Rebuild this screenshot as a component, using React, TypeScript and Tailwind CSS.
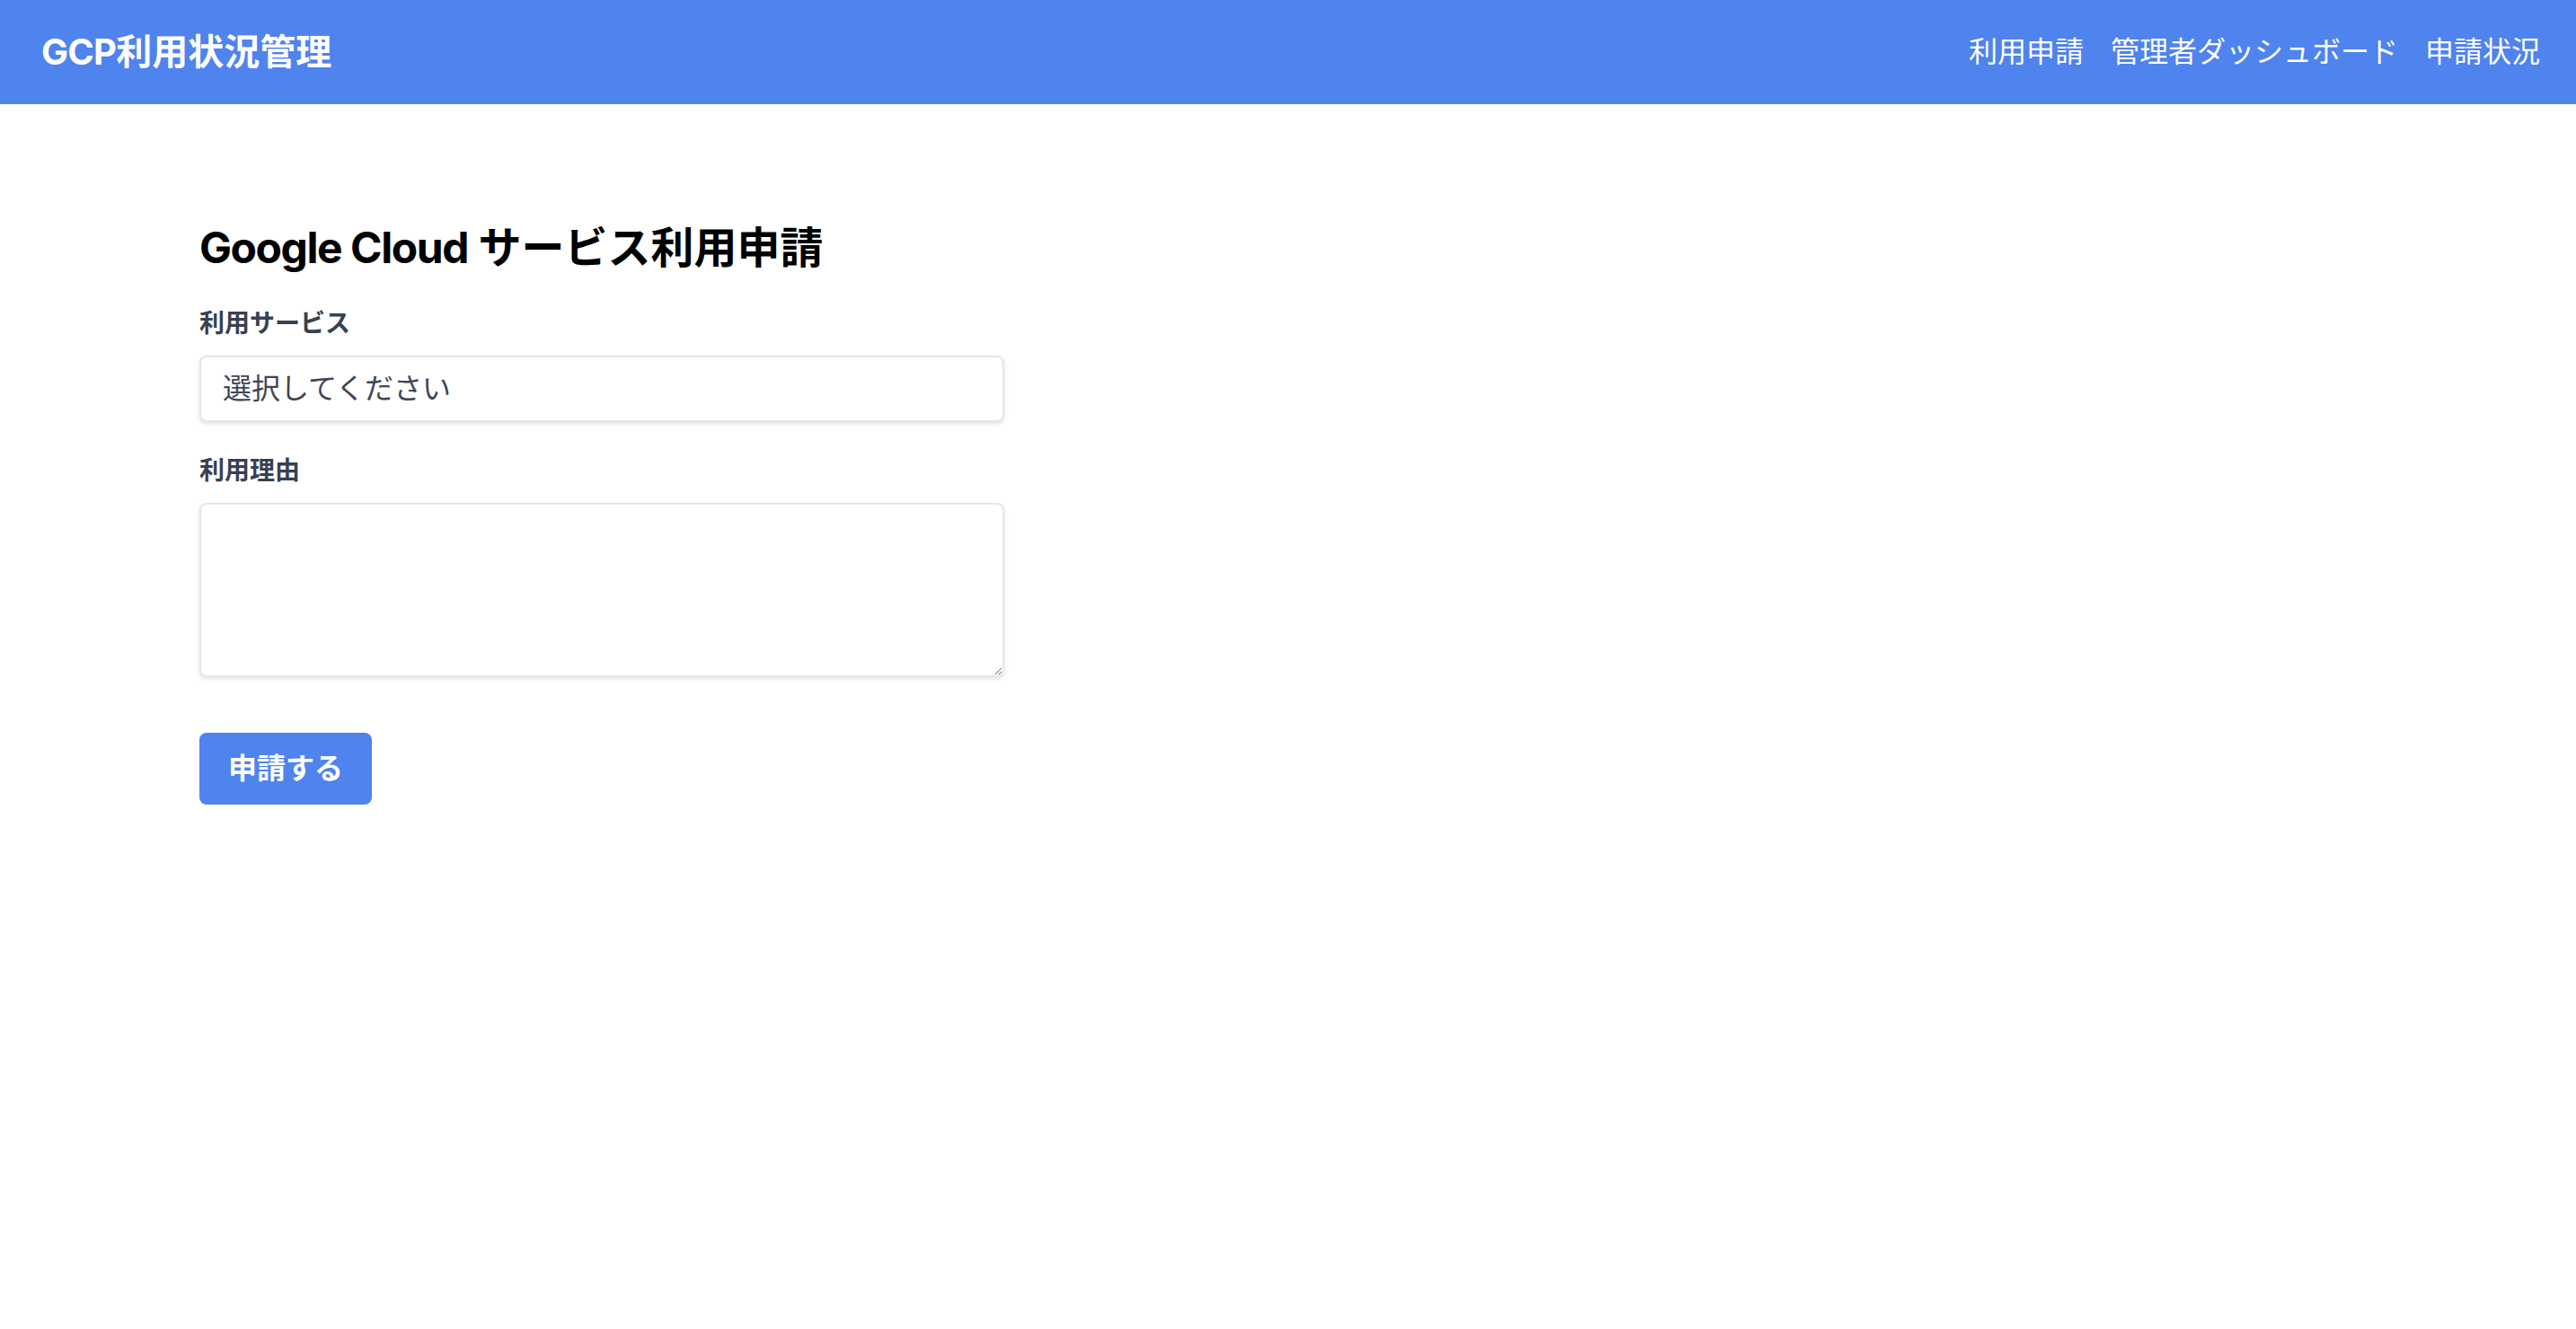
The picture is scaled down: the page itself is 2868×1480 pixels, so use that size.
import React, { useState } from 'react';

const navItems = ['利用申請', '管理者ダッシュボード', '申請状況'];

const services = ['Compute Engine', 'Cloud Storage', 'BigQuery', 'Cloud Run'];

const App: React.FC = () => {
  const [service, setService] = useState('');
  const [reason, setReason] = useState('');

  return (
    <div className="min-h-screen bg-white font-['Inter','Noto_Sans_CJK_JP',sans-serif]">
      {/* Header */}
      <header className="flex h-[116px] items-center justify-between bg-[#4f83ee] pl-[46px] pr-[40px]">
        <h1 className="text-[40px] font-bold leading-[56px] text-white">
          <span className="tracking-[-0.02em]">GCP</span>利用状況管理
        </h1>
        <nav className="flex gap-[30px]">
          {navItems.map((item) => (
            <a key={item} href="#" className="text-[32px] leading-[48px] text-white">
              {item}
            </a>
          ))}
        </nav>
      </header>

      {/* Form */}
      <main className="pl-[222px] pt-[128px]">
        <h2 className="mb-[32px] text-[48px] font-bold leading-[64px] text-black">
          <span className="tracking-[-0.03em]">Google Cloud</span> サービス利用申請
        </h2>
        <form onSubmit={(e) => e.preventDefault()} className="w-[896px]">
          <label className="mb-[16px] block text-[28px] font-bold leading-[40px] text-[#374151]">
            利用サービス
          </label>
          <select
            value={service}
            onChange={(e) => setService(e.target.value)}
            className="mb-[34px] block h-[74px] w-full appearance-none rounded-[8px] border-2 border-[#e5e7eb] bg-white px-[24px] text-[32px] leading-[40px] text-[#3f4656] shadow-[0_2px_5px_rgba(0,0,0,0.12)] outline-none"
          >
            <option value="">選択してください</option>
            {services.map((s) => (
              <option key={s} value={s}>
                {s}
              </option>
            ))}
          </select>

          <label className="mb-[16px] block text-[28px] font-bold leading-[40px] text-[#374151]">
            利用理由
          </label>
          <textarea
            value={reason}
            onChange={(e) => setReason(e.target.value)}
            className="mb-[62px] block h-[194px] w-full rounded-[8px] border-2 border-[#e5e7eb] bg-white px-[24px] py-[16px] text-[32px] leading-[40px] text-[#3f4656] shadow-[0_2px_5px_rgba(0,0,0,0.12)] outline-none"
          />

          <button
            type="submit"
            className="h-[80px] w-[192px] rounded-[8px] bg-[#4f83ee] text-[32px] font-bold leading-[48px] text-white"
          >
            申請する
          </button>
        </form>
      </main>
    </div>
  );
};

export default App;
